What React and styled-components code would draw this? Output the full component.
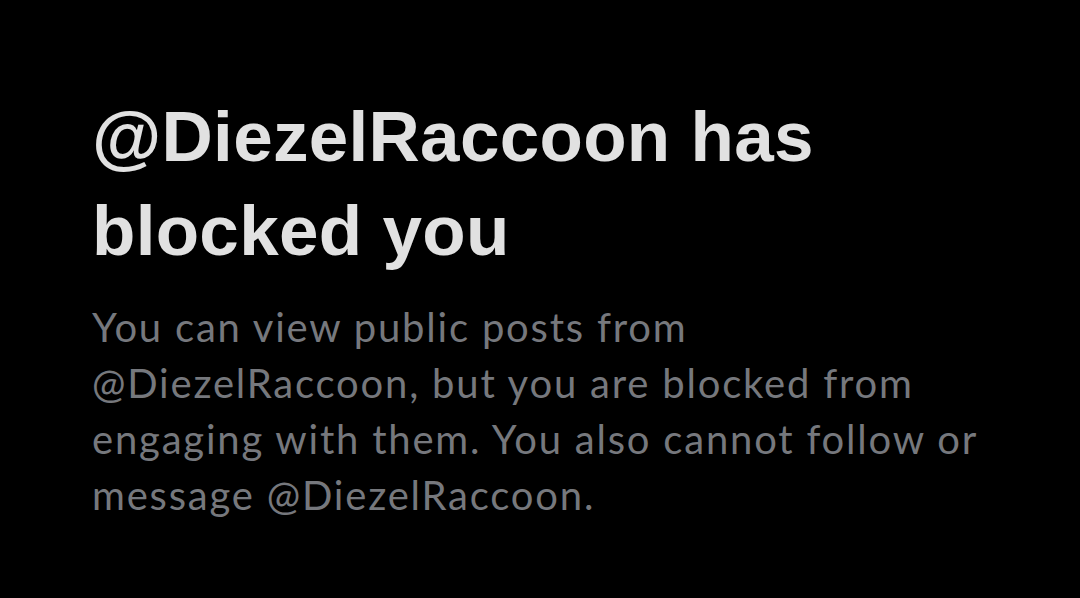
import styled, { createGlobalStyle } from 'styled-components'

const Global = createGlobalStyle`
    html, body {
        margin: 0;
        background: #000000;
    }
`

const Page = styled.main`
    width: 1080px;
    height: 598px;
    box-sizing: border-box;
    background: #000000;
    padding: 90px 60px 0 92px;
    overflow: hidden;
`

const Title = styled.h1`
    margin: 0;
    font-family: "Liberation Sans", Arial, sans-serif;
    font-weight: 700;
    font-size: 71px;
    line-height: 94px;
    letter-spacing: 0.3px;
    color: #e1e1e1;
    width: 820px;
`

const Body = styled.p`
    margin: 21px 0 0;
    font-family: Lato, "Noto Sans", sans-serif;
    font-weight: 400;
    font-size: 40px;
    line-height: 56px;
    letter-spacing: 1.8px;
    color: #76787d;
`

const App = () => {
    return (
        <>
            <Global />
            <Page>
                <Title>@DiezelRaccoon has blocked you</Title>
                <Body>
                    You can view public posts from<br />
                    @DiezelRaccoon, but you are blocked from<br />
                    engaging with them. You also cannot follow or<br />
                    message @DiezelRaccoon.
                </Body>
            </Page>
        </>
    );
}

export default App;
